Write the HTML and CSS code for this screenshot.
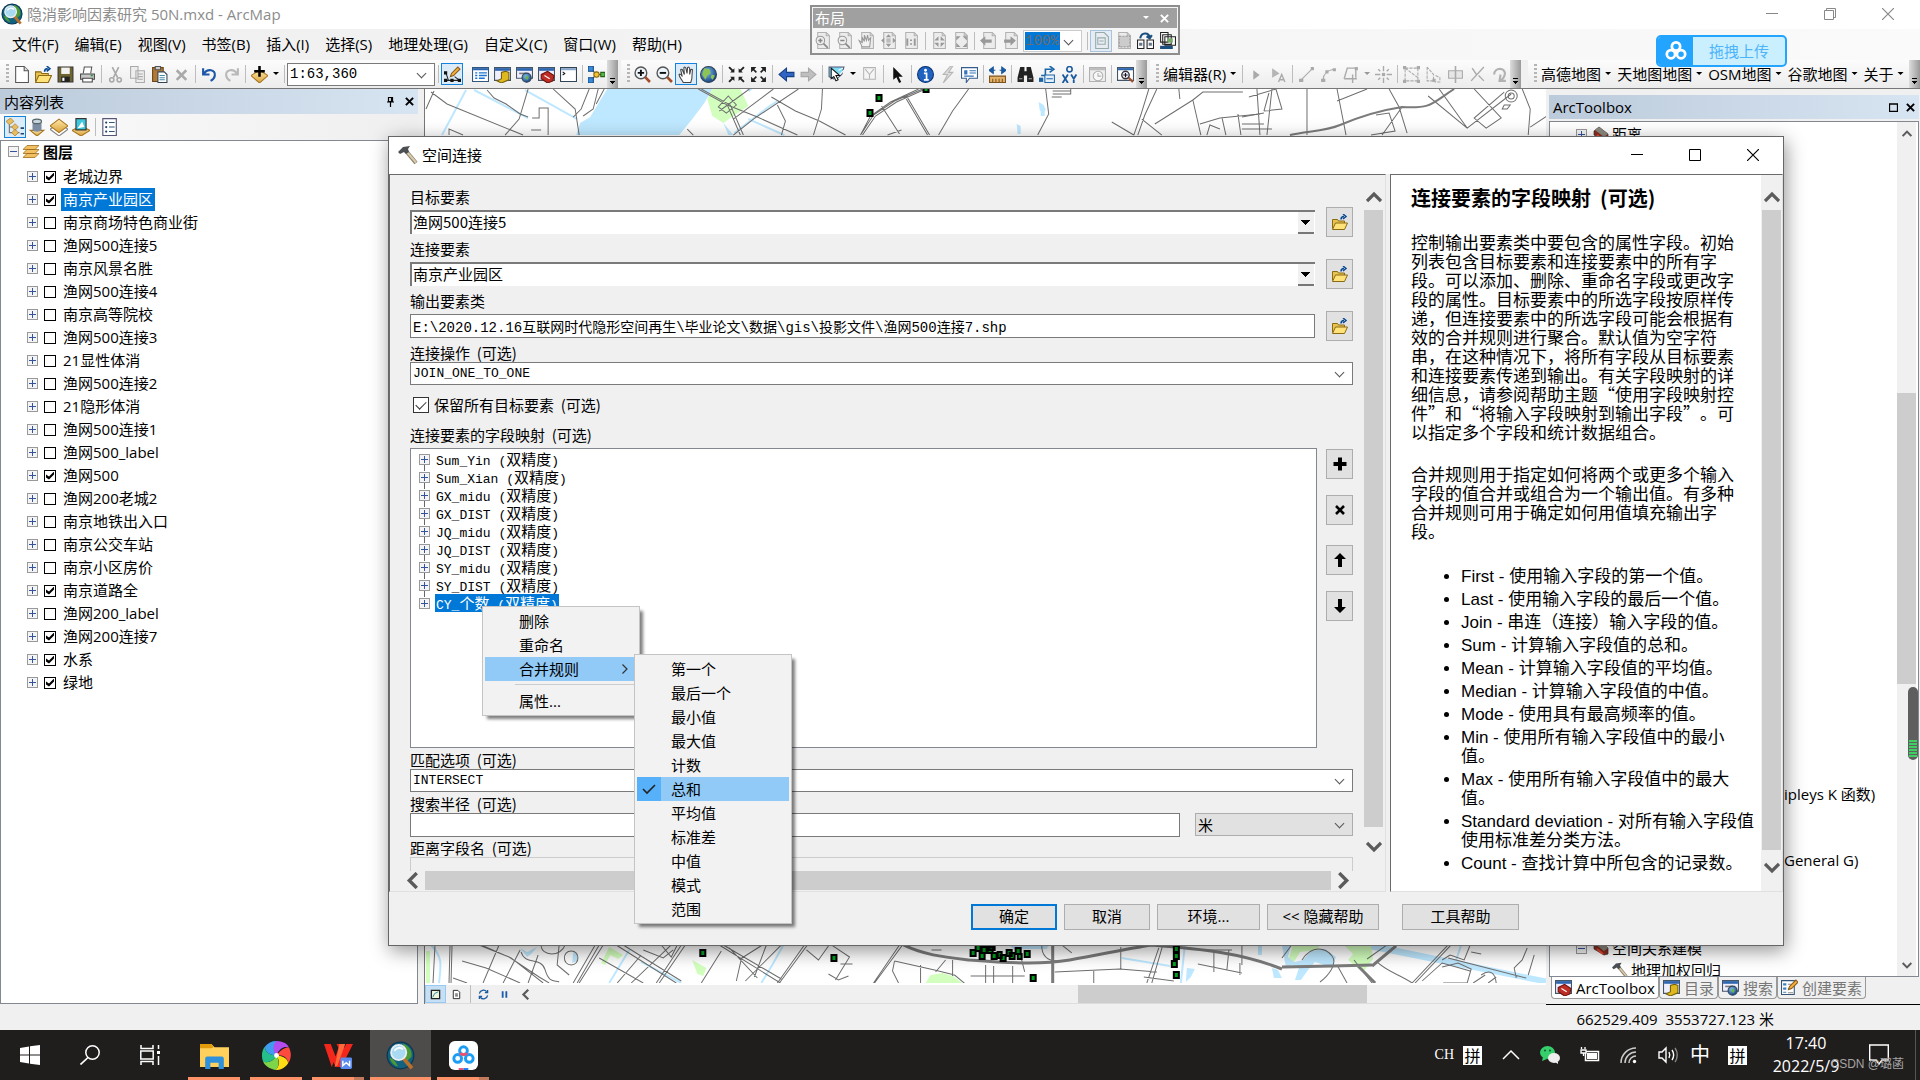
FILE: index.html
```html
<!DOCTYPE html>
<html lang="zh-CN">
<head>
<meta charset="utf-8">
<title>隐消影响因素研究 50N.mxd - ArcMap</title>
<link rel="stylesheet" href="styles.css">
</head>
<body>
<svg class="defs" aria-hidden="true">
<defs>
<linearGradient id="gold" x1="0" y1="0" x2="0" y2="1"><stop offset="0" stop-color="#ffe9a8"/><stop offset="1" stop-color="#d9a13a"/></linearGradient>
<radialGradient id="ball" cx=".4" cy=".35" r=".7"><stop offset="0" stop-color="#7fc0f0"/><stop offset="1" stop-color="#123a78"/></radialGradient>
</defs>
<symbol id="arcmap" viewBox="0 0 24 24"><circle cx="12" cy="12" r="11.5" fill="#0c3550"/><circle cx="12" cy="12" r="10.5" fill="#12617f"/><path d="M14 2c5 2 8 6 7 11l-4 4-3-4 2-4zM3 14c3 0 5 3 7 7-4-1-6-4-7-7z" fill="#4d9a35"/><path d="M14.5 14.500l7 8" stroke="#b8712c" stroke-width="3"/><circle cx="10.500" cy="9.500" r="6.300" fill="#a9daf2" stroke="#e8eef2" stroke-width="1.500"/><path d="M7 8c2-3 5-3 7-1" stroke="#fff" stroke-width="1.500" fill="none"/></symbol>
<symbol id="new" viewBox="0 0 16 16"><path d="M2.500.5h8l4 4v11h-12z" fill="#fff" stroke="#555"/><path d="M10.500.5v4h4" fill="#ddd" stroke="#555"/></symbol>
<symbol id="open" viewBox="0 0 16 16"><path d="M.5 14.500v-9h5l1 1.500h6v3" fill="#e8c352" stroke="#8a6a14"/><path d="M.5 15.500l3-6.500h12l-3 6.500z" fill="#ffe27a" stroke="#8a6a14"/><path d="M9 5.500c0-2 1-3 3-3M11 0l3 2.500L11 5" fill="none" stroke="#0a4a94" stroke-width="1.500"/></symbol>
<symbol id="save" viewBox="0 0 16 16"><path d="M1 1h14v14H1z" fill="#6e6430" stroke="#333"/><path d="M4 1.500h8v6H4z" fill="#f2f2f2"/><path d="M4 10h8v5H4z" fill="#222"/><path d="M5 11h2v3H5z" fill="#fff"/></symbol>
<symbol id="print" viewBox="0 0 16 16"><path d="M4 7l1-6h7l-1 6" fill="#fff" stroke="#555"/><path d="M1.500 7.500h13v5h-13z" fill="#c8c8c8" stroke="#444"/><path d="M3.500 11.500h9v3.500h-9z" fill="#fff" stroke="#444"/><path d="M11 9h2" stroke="#2a9030" stroke-width="1.500"/></symbol>
<symbol id="cut" viewBox="0 0 16 16"><path d="M5 1l5 10M11 1L6 11" stroke="#a9a9a9" stroke-width="1.500"/><circle cx="4.500" cy="13" r="2" fill="none" stroke="#a9a9a9" stroke-width="1.500"/><circle cx="11.500" cy="13" r="2" fill="none" stroke="#a9a9a9" stroke-width="1.500"/></symbol>
<symbol id="copy" viewBox="0 0 16 16"><path d="M1.500.5h7v11h-7zM6.500 4.500h8v11h-8z" fill="#eee" stroke="#aaa"/><path d="M8 7.500h5M8 10h5M8 12.500h5" stroke="#aaa"/></symbol>
<symbol id="paste" viewBox="0 0 16 16"><path d="M1.500 1.500h10v13h-10z" fill="#b27a35" stroke="#6c4514"/><path d="M4 .5h5v3H4z" fill="#ccc" stroke="#555"/><path d="M6.500 5.500h6l2.500 2.500v7.500H6.500z" fill="#fff" stroke="#345"/><path d="M8 9h5M8 11h5M8 13h5" stroke="#48a"/></symbol>
<symbol id="del" viewBox="0 0 16 16"><path d="M3.500 4l9 9M12.500 4l-9 9" stroke="#a9a9a9" stroke-width="2.400"/></symbol>
<symbol id="undo" viewBox="0 0 16 16"><path d="M2 2v6h6M2.500 7.500C6 2 14 3 13 9c-.5 3-2 4-4 5" fill="none" stroke="#1d57a8" stroke-width="2"/></symbol>
<symbol id="redo" viewBox="0 0 16 16"><path d="M14 2v6H8M13.500 7.500C10 2 2 3 3 9c.5 3 2 4 4 5" fill="none" stroke="#b9b9b9" stroke-width="2"/></symbol>
<symbol id="add" viewBox="0 0 16 16"><path d="M0 9l8-5 8 5-8 7z" fill="url(#gold)" stroke="#a87620"/><path d="M8 0v10M3 5h10" stroke="#000" stroke-width="2.400"/></symbol>
<symbol id="editor" viewBox="0 0 16 16"><path d="M1.500 13.500h13M2 7l2 6M10 10l4 3" stroke="#222"/><path d="M0 12h3v3H0zM6 12h3v3H6zM13 12h3v3h-3zM0 5h3v3H0z" fill="#111"/><path d="M6 10l1-3 6-6 2 2-6 6z" fill="#f3b13c" stroke="#8b5a1b"/></symbol>
<symbol id="toc" viewBox="0 0 16 16"><path d="M.5 1.500h15v13H.5z" fill="#fff" stroke="#34577e"/><path d="M1 2h14v2H1z" fill="#2c64ae"/><path d="M3 6.500h2M3 9h2M3 11.500h2M6.500 6.500H14M6.500 9H14M6.500 11.500H12" stroke="#1d74d0" stroke-width="1.300"/></symbol>
<symbol id="catalog" viewBox="0 0 16 16"><path d="M.5 1.500h15v12H.5z" fill="#eef" stroke="#456"/><path d="M1 2h14v2.500H1z" fill="#2c64ae"/><path d="M7 6l4-1 3 1v7l-7 3-4-2 4-2z" fill="#ddb91f" stroke="#77600a"/></symbol>
<symbol id="find2" viewBox="0 0 16 16"><path d="M.5 1.500h15v10H.5z" fill="#eef" stroke="#456"/><path d="M1 2h14v2.500H1z" fill="#2c64ae"/><path d="M3 7h7" stroke="#777" stroke-width="1.500"/><circle cx="10" cy="11" r="4.300" fill="url(#ball)" stroke="#345"/><path d="M9 9l3 1-1 3-2-1z" fill="#69b44a"/></symbol>
<symbol id="tbx" viewBox="0 0 16 16"><path d="M.5 1.500h15v12H.5z" fill="#eef" stroke="#456"/><path d="M1 2h14v2.500H1z" fill="#2c64ae"/><path d="M3 8l6-3 6 4-1 5-5 2-6-4z" fill="#bd2d24" stroke="#6d100a"/><path d="M6 9l5 3" stroke="#fff"/></symbol>
<symbol id="py" viewBox="0 0 16 16"><path d="M.5 1.500h15v13H.5z" fill="#fff" stroke="#345"/><path d="M1 2h14v2H1z" fill="#8ba9ce"/><path d="M2.500 5.500l2 1.500-2 1.500" fill="none" stroke="#111"/></symbol>
<symbol id="model" viewBox="0 0 16 16"><path d="M3 3l5 5-5 5M8 8h6" fill="none" stroke="#444"/><path d="M0 0h5v5H0zM0 11h5v5H0z" fill="#3b8ad8" stroke="#134a84"/><circle cx="8" cy="8" r="2.500" fill="#f4c430" stroke="#8a6a14"/><path d="M12 6h4v4h-4z" fill="#58b548" stroke="#256318"/></symbol>
<symbol id="zin" viewBox="0 0 16 16"><circle cx="6.500" cy="6.500" r="5.500" fill="#eef5fb" stroke="#555" stroke-width="1.300"/><path d="M10.500 10.500l4.500 4.500" stroke="#a34c2a" stroke-width="2.500"/><path d="M6.500 3.500v6M3.500 6.500h6" stroke="#111" stroke-width="1.800"/></symbol>
<symbol id="zout" viewBox="0 0 16 16"><circle cx="6.500" cy="6.500" r="5.500" fill="#eef5fb" stroke="#555" stroke-width="1.300"/><path d="M10.500 10.500l4.500 4.500" stroke="#a34c2a" stroke-width="2.500"/><path d="M3.500 6.500h6" stroke="#111" stroke-width="1.800"/></symbol>
<symbol id="hand" viewBox="0 0 16 16"><path d="M5 15.500C3 12 1 10 1 8c1-1 2 0 3 2L2.500 3.500c1-1 2 0 2 1L6 8 5.500 1.500c1-1 2 0 2 1L8.500 7 9 1.500c1-1 2 0 2 1V8l1-4.500c1-.8 2 0 1.500 1L13 12l-1 3.500z" fill="#fff" stroke="#444"/></symbol>
<symbol id="globe" viewBox="0 0 16 16"><circle cx="8" cy="8" r="7.500" fill="url(#ball)" stroke="#345"/><path d="M4 2l5 1 1 4-3 2-2 4-3-5zM11 8l3 1-2 4-2-2z" fill="#8cc456"/></symbol>
<symbol id="fin" viewBox="0 0 16 16"><path d="M1 1l4 4M15 1l-4 4M1 15l4-4M15 15l-4-4" stroke="#222" stroke-width="1.800"/><path d="M6 2v4H2zM10 2v4h4zM6 14v-4H2zM10 14v-4h4z" fill="#222"/></symbol>
<symbol id="fout" viewBox="0 0 16 16"><path d="M2 2l4 4M14 2l-4 4M2 14l4-4M14 14l-4-4" stroke="#222" stroke-width="1.500"/><path d="M1 1h5L1 6zM15 1h-5l5 5zM1 15h5l-5-5zM15 15h-5l5-5z" fill="#222"/></symbol>
<symbol id="back" viewBox="0 0 16 16"><path d="M1 8l7-6v4h7v4H8v4z" fill="#2f66c4" stroke="#163f86"/></symbol>
<symbol id="fwd" viewBox="0 0 16 16"><path d="M15 8L8 2v4H1v4h7v4z" fill="#bfbfbf" stroke="#a9a9a9"/></symbol>
<symbol id="selft" viewBox="0 0 16 16"><path d="M1 1h14l-2 7-6 5-6-3z" fill="#7ddcf4" stroke="#557"/><path d="M10 4l4-2M6 13l9-9" stroke="#fff"/><path d="M3 2v10l2.500-2 2 4 2-1-2-4H11z" fill="#fff" stroke="#111"/></symbol>
<symbol id="clr" viewBox="0 0 16 16"><path d="M2.500 1.500h11v11h-11z" fill="#f5f5f5" stroke="#b5b5b5"/><path d="M4 3l4 5 4-5M8 8v4" fill="none" stroke="#b5b5b5"/></symbol>
<symbol id="ptr" viewBox="0 0 16 16"><path d="M4 1v12l3-2.500L9.500 16l2-1L9 10h4z" fill="#111"/></symbol>
<symbol id="info" viewBox="0 0 16 16"><circle cx="8" cy="8" r="7.500" fill="#1f62c0" stroke="#0c3474"/><path d="M6.500 7H9v6M6.500 13H11" stroke="#fff" stroke-width="1.600" fill="none"/><circle cx="8" cy="4" r="1.300" fill="#fff"/></symbol>
<symbol id="bolt" viewBox="0 0 16 16"><path d="M11 0L4 8h4l-4 8 9-10H9l4-6z" fill="#ddd" stroke="#b5b5b5"/></symbol>
<symbol id="html" viewBox="0 0 16 16"><path d="M.5 1.500h15v10H8l-3 4v-4H.5z" fill="#fff" stroke="#355d8c"/><path d="M3 4h3v4H3z" fill="#3574b8"/><path d="M8 4.500h6M8 6.500h6M3 9.500h9" stroke="#3574b8"/></symbol>
<symbol id="meas" viewBox="0 0 16 16"><path d="M.5 9.500h15v6H.5z" fill="#e4b168" stroke="#7d5520"/><path d="M3.500 12v3M6.500 12v3M9.500 12v3M12.500 12v3" stroke="#7d5520"/><path d="M0 4l4-3v6zM16 4l-4-3v6zM3 4h3M10 4h3" fill="#1b5a9e" stroke="#1b5a9e"/></symbol>
<symbol id="bino" viewBox="0 0 16 16"><path d="M3 1h4v4h2V1h4l2.500 10v4H9.500V9h-3v6H.5v-4z" fill="#222"/><path d="M2 12h3M11 12h3" stroke="#aaa"/></symbol>
<symbol id="route" viewBox="0 0 16 16"><path d="M2 9h4V3h6M10 0l4 3-4 3" fill="none" stroke="#1b66a8" stroke-width="1.500"/><path d="M5.500 8.500h9v7h-9z" fill="#e5f1fa" stroke="#1b66a8"/><path d="M0 11h4v4H0z" fill="#1b66a8"/><path d="M7 12h6" stroke="#1b66a8"/></symbol>
<symbol id="xy" viewBox="0 0 16 16"><circle cx="8" cy="3" r="2.500" fill="none" stroke="#1b5a9e" stroke-width="1.500"/><path d="M1.500 8l5 8M6.500 8l-5 8M9.500 8l2.500 4 2.500-4M12 12v4" stroke="#1b5a9e" stroke-width="1.700" fill="none"/></symbol>
<symbol id="time" viewBox="0 0 16 16"><path d="M.5 1.500h15v13H.5z" fill="#eee" stroke="#b0b0b0"/><path d="M1 2h14v2H1z" fill="#bbb"/><circle cx="8.500" cy="9.500" r="4.500" fill="#f8f8f8" stroke="#b0b0b0"/><path d="M8.500 6.500v3h3" fill="none" stroke="#b0b0b0"/></symbol>
<symbol id="viewer" viewBox="0 0 16 16"><path d="M.5 1.500h15v12H.5z" fill="#fff" stroke="#456"/><path d="M1 2h14v2H1z" fill="#2c64ae"/><circle cx="8" cy="8.500" r="3.500" fill="#eef" stroke="#333" stroke-width="1.300"/><path d="M8 6.500v4M6 8.500h4" stroke="#111"/><path d="M11 11l4 4" stroke="#a34c2a" stroke-width="2"/></symbol>
<symbol id="g1" viewBox="0 0 16 16"><path d="M5 4l6 4.500L5 13z" fill="#a9a9a9"/></symbol>
<symbol id="g2" viewBox="0 0 16 16"><path d="M2 2l7 5-7 4z" fill="#b5b5b5"/><path d="M8 15l3-7 3 7M9 13h4" fill="none" stroke="#a9a9a9" stroke-width="1.300"/></symbol>
<symbol id="g3" viewBox="0 0 16 16"><path d="M2 14L14 2" stroke="#aaa"/><path d="M1 12h4v3H1zM12 1h3v3h-3z" fill="#aaa"/></symbol>
<symbol id="g4" viewBox="0 0 16 16"><path d="M3 13c0-6 4-9 10-10" fill="none" stroke="#aaa"/><path d="M1 12h4v3H1zM5 4h3v3H5zM12 2h3v3h-3z" fill="#aaa"/></symbol>
<symbol id="g5" viewBox="0 0 16 16"><path d="M2 12L5 2h8v9M2 12h8M10 8v8M6 12h8" fill="none" stroke="#aaa" stroke-width="1.300"/><path d="M12 1h3v3h-3z" fill="#aaa"/></symbol>
<symbol id="g6" viewBox="0 0 16 16"><path d="M8 0v5M8 11v5M0 8h5M11 8h5M3 3l2 2M13 3l-2 2M3 13l2-2M13 13l-2-2" stroke="#aaa" stroke-width="1.300"/><path d="M6.500 6.500h3v3h-3z" fill="#aaa"/></symbol>
<symbol id="g7" viewBox="0 0 16 16"><path d="M2 2h12v12H2zM2 2l12 9" fill="none" stroke="#aaa" stroke-dasharray="3 1"/><path d="M0 0h3v3H0zM13 0h3v3h-3zM0 13h3v3H0zM13 13h3v3h-3z" fill="#aaa"/></symbol>
<symbol id="g8" viewBox="0 0 16 16"><path d="M2 1v13h6V8L2 1M10 9l4 2v4h-5" fill="none" stroke="#aaa" stroke-dasharray="3 1"/><path d="M7 12h3v3H7z" fill="#aaa"/></symbol>
<symbol id="g9" viewBox="0 0 16 16"><path d="M1.500 4.500h13v7h-13z" fill="#e6e6e6" stroke="#aaa"/><path d="M8 0v16" stroke="#aaa" stroke-width="1.500"/></symbol>
<symbol id="g10" viewBox="0 0 16 16"><path d="M3 2l4 6M14 1L2 14M9 9l5 5" stroke="#aaa" stroke-width="1.300"/></symbol>
<symbol id="g11" viewBox="0 0 16 16"><path d="M3 8c0-7 11-7 10 0-.5 3-2 4-4 6M9 8l-1 6h6" fill="none" stroke="#b2b2b2" stroke-width="2"/></symbol>
<symbol id="pg" viewBox="0 0 16 16"><path d="M3.500.5h8l3 3v12h-11z" fill="#ececec" stroke="#b2b2b2"/><path d="M11.500.5v3h3" fill="none" stroke="#b2b2b2"/></symbol>
<symbol id="l1" viewBox="0 0 16 16"><use href="#pg"/><circle cx="6" cy="8" r="4" fill="#eee" stroke="#999"/><path d="M6 6v4M4 8h4M9 11l4 4" stroke="#888" stroke-width="1.500"/></symbol>
<symbol id="l2" viewBox="0 0 16 16"><use href="#pg"/><circle cx="6" cy="8" r="4" fill="#eee" stroke="#999"/><path d="M4 8h4M9 11l4 4" stroke="#888" stroke-width="1.500"/></symbol>
<symbol id="l3" viewBox="0 0 16 16"><use href="#pg"/><path d="M4 14L1 8l3 2V5l2 4V3l2 5 1-5 1 5 2-3-1 9z" fill="#f3f3f3" stroke="#999"/></symbol>
<symbol id="l4" viewBox="0 0 16 16"><use href="#pg"/><path d="M8 2l2.500 3h-5zM8 14l2.500-3h-5zM1 8l3-2.500v5zM15 8l-3-2.500v5z" fill="#999"/><path d="M6 6h4v4H6z" fill="#bbb"/></symbol>
<symbol id="l5" viewBox="0 0 16 16"><use href="#pg"/><path d="M5 6v7M12 6v7M8.500 7v1.500M8.500 10.500v1.500" stroke="#999" stroke-width="1.800"/></symbol>
<symbol id="l6" viewBox="0 0 16 16"><use href="#pg"/><path d="M8 4v4H4zM10 4v4h4zM8 14v-4H4zM10 14v-4h4z" fill="#999"/></symbol>
<symbol id="l7" viewBox="0 0 16 16"><use href="#pg"/><path d="M4 4h4L4 8zM14 4h-4l4 4zM4 14h4l-4-4zM14 14h-4l4-4z" fill="#999"/></symbol>
<symbol id="l8" viewBox="0 0 16 16"><use href="#pg"/><path d="M0 8l5-4v3h6v3H5v3z" fill="#999"/></symbol>
<symbol id="l9" viewBox="0 0 16 16"><use href="#pg"/><path d="M13 8L8 4v3H2v3h6v3z" fill="#999"/></symbol>
<symbol id="l10" viewBox="0 0 16 16"><path d="M2.500.5h8l4 4v11h-12z" fill="#e6ecf2" stroke="#9aa"/><path d="M4.500 5.500h7v6h-7zM6 8.500h4" fill="none" stroke="#9aa"/></symbol>
<symbol id="l11" viewBox="0 0 16 16"><use href="#pg"/><path d="M4 4h10v10H4z" fill="#ccc" stroke="#999" stroke-dasharray="2 1"/></symbol>
<symbol id="l12" viewBox="0 0 16 16"><path d="M3 6c1-6 8-6 9-1M9 4l3 2 2-3" fill="none" stroke="#1b4f80" stroke-width="2"/><path d="M.5 7.500h6v8h-6zM9.500 7.500h6v8h-6z" fill="#fff" stroke="#222"/><path d="M2 10h3v3H2zM11 10h3v3h-3z" fill="#678"/></symbol>
<symbol id="l13" viewBox="0 0 16 16"><path d="M1.500.5h7v9h-7zM3.500 2.500h8v9h-8zM5.500 4.500h10v8h-10z" fill="#fff" stroke="#222"/><path d="M8 6h5v4H8z" fill="#79a86a"/><path d="M1 13h12v3H1z" fill="#1b4f80"/></symbol>
<symbol id="t1" viewBox="0 0 16 16"><path d="M3 4v9h9M3 8h6" stroke="#777" fill="none"/><path d="M0 3l4-3 3 3-4 3zM5 8l3-3 3 3-3 3zM5 13l3-3 3 3-3 3z" fill="#e8bd62" stroke="#a87620" stroke-width=".6"/><path d="M13 9h3M13 14h3" stroke="#246" stroke-width="1.500"/></symbol>
<symbol id="t2" viewBox="0 0 16 16"><path d="M2 11l6 5 6-5z" fill="url(#gold)" stroke="#a87620"/><path d="M4 3v7c0 3 8 3 8 0V3z" fill="#7c8ca2"/><ellipse cx="8" cy="3" rx="4" ry="2" fill="#c9d3df" stroke="#566"/></symbol>
<symbol id="t3" viewBox="0 0 16 16"><path d="M0 10l8 6 8-6-8-5z" fill="#fff" stroke="#888"/><path d="M0 7l8-6 8 6-8 6z" fill="url(#gold)" stroke="#a87620"/></symbol>
<symbol id="t4" viewBox="0 0 16 16"><path d="M0 11l8 5 8-5-8-4z" fill="url(#gold)" stroke="#a87620"/><path d="M3.500.5h9v10h-9z" fill="#3fc8dd" stroke="#333"/><path d="M5 9l4-6 2 5z" fill="#fff"/></symbol>
<symbol id="t5" viewBox="0 0 16 16"><path d="M2.500.5h12v15h-12z" fill="#fff" stroke="#557"/><circle cx="5.500" cy="4" r="1" fill="#246"/><circle cx="5.500" cy="8" r="1" fill="#246"/><circle cx="5.500" cy="12" r="1" fill="#246"/><path d="M8 4h5M8 8h5M8 12h5" stroke="#357"/></symbol>
<symbol id="layers" viewBox="0 0 16 14"><path d="M0 13l4-4h12l-4 4zM0 9l4-4h12l-4 4zM0 5l4-4h12l-4 4z" fill="#f0c063" stroke="#a06c1c" stroke-width=".8"/></symbol>
<symbol id="hammer" viewBox="0 0 20 20"><path d="M8 6l10 12" stroke="#8d8168" stroke-width="4"/><path d="M8.500 6.500l9.500 11" stroke="#d8ccb0" stroke-width="2"/><path d="M0 7l5-5 7-1-2 3 1 3-3 2-2-2-4 2z" fill="#4c5054"/></symbol>
<symbol id="box" viewBox="0 0 16 16"><path d="M1 5l5-4 9 7v6l-4 1L1 9z" fill="#8c2d20" stroke="#333" stroke-width=".7"/><path d="M2 4l4-3 9 7-4 3z" fill="#8a8a80"/><path d="M4 9l6 5" stroke="#e84a30" stroke-width="2"/></symbol>
<symbol id="crt" viewBox="0 0 16 16"><path d="M.5 1.500h12v13H.5z" fill="#fff" stroke="#357"/><path d="M2 4h3v2H2zM2 8h3v2H2zM2 12h3v1H2z" fill="#3a80c0"/><path d="M6.500 5h4M6.500 9h3M6.500 13h5" stroke="#888"/><path d="M7 10l1-3 6-6 2 2-6 6z" fill="#f3b13c" stroke="#8b5a1b"/></symbol>
<symbol id="cloud" viewBox="0 0 24 24"><circle cx="12" cy="7" r="4.500" fill="none" stroke="currentColor" stroke-width="3"/><circle cx="6.500" cy="15.500" r="4.500" fill="none" stroke="currentColor" stroke-width="3"/><circle cx="17.500" cy="15.500" r="4.500" fill="none" stroke="currentColor" stroke-width="3"/></symbol>
<symbol id="up" viewBox="0 0 16 12"><path d="M1 10l7-7 7 7" fill="none" stroke="#5b5b5b" stroke-width="3.200"/></symbol>
<symbol id="down" viewBox="0 0 16 12"><path d="M1 2l7 7 7-7" fill="none" stroke="#5b5b5b" stroke-width="3.200"/></symbol>
<symbol id="left" viewBox="0 0 12 16"><path d="M10 1L3 8l7 7" fill="none" stroke="#5b5b5b" stroke-width="3.200"/></symbol>
<symbol id="right" viewBox="0 0 12 16"><path d="M2 1l7 7-7 7" fill="none" stroke="#5b5b5b" stroke-width="3.200"/></symbol>
<symbol id="min" viewBox="0 0 12 12"><path d="M0 5.500h12" stroke="currentColor"/></symbol>
<symbol id="max" viewBox="0 0 12 12"><path d="M.5.5h11v11H.5z" fill="none" stroke="currentColor"/></symbol>
<symbol id="cls" viewBox="0 0 12 12"><path d="M0 0l12 12M12 0L0 12" stroke="currentColor" stroke-width="1.200"/></symbol>
<symbol id="clsb" viewBox="0 0 10 10"><path d="M1 1l8 8M9 1L1 9" stroke="currentColor" stroke-width="2.200"/></symbol>
</svg>

<header class="titlebar">
  <svg class="i22"><use href="#arcmap"/></svg>
  <h1>隐消影响因素研究 50N.mxd - ArcMap</h1>
  <div class="winctl">
    <button aria-label="最小化"><svg class="i12"><use href="#min"/></svg></button>
    <button aria-label="还原"><svg class="i12" viewBox="0 0 12 12"><path d="M.5 2.500h9v9h-9zM2.500 2.500v-2h9v9h-2" fill="none" stroke="#888"/></svg></button>
    <button aria-label="关闭"><svg class="i12"><use href="#cls"/></svg></button>
  </div>
</header>

<nav class="menubar">
  <button>文件(F)</button><button>编辑(E)</button><button>视图(V)</button><button>书签(B)</button><button>插入(I)</button><button>选择(S)</button><button>地理处理(G)</button><button>自定义(C)</button><button>窗口(W)</button><button>帮助(H)</button>
</nav>

<div class="toolbars">
  <div class="toolbar">
    <i class="grip"></i>
    <button><svg><use href="#new"/></svg></button><button><svg><use href="#open"/></svg></button><button><svg><use href="#save"/></svg></button><button><svg><use href="#print"/></svg></button><i class="sep"></i>
    <button><svg><use href="#cut"/></svg></button><button><svg><use href="#copy"/></svg></button><button><svg><use href="#paste"/></svg></button><button><svg><use href="#del"/></svg></button><i class="sep"></i>
    <button><svg><use href="#undo"/></svg></button><button><svg><use href="#redo"/></svg></button><i class="sep"></i>
    <button><svg><use href="#add"/></svg></button><i class="caret"></i><i class="sep"></i>
    <div class="pick scale"><select aria-label="比例尺"><option>1:63,360</option></select></div><i class="sep"></i>
    <button class="on"><svg><use href="#editor"/></svg></button><i class="sep blank"></i>
    <button><svg><use href="#toc"/></svg></button><button><svg><use href="#catalog"/></svg></button><button><svg><use href="#find2"/></svg></button><button><svg><use href="#tbx"/></svg></button><button><svg><use href="#py"/></svg></button><i class="sep"></i>
    <button><svg><use href="#model"/></svg></button><i class="more"></i>
  </div>
  <div class="toolbar">
    <i class="grip"></i>
    <button><svg><use href="#zin"/></svg></button><button><svg><use href="#zout"/></svg></button><button class="on"><svg><use href="#hand"/></svg></button><button><svg><use href="#globe"/></svg></button><i class="sep"></i>
    <button><svg><use href="#fin"/></svg></button><button><svg><use href="#fout"/></svg></button><i class="sep"></i>
    <button><svg><use href="#back"/></svg></button><button><svg><use href="#fwd"/></svg></button><i class="sep"></i>
    <button><svg><use href="#selft"/></svg></button><i class="caret"></i><button><svg><use href="#clr"/></svg></button><i class="sep"></i>
    <button><svg><use href="#ptr"/></svg></button><i class="sep"></i>
    <button><svg><use href="#info"/></svg></button><button><svg><use href="#bolt"/></svg></button><button><svg><use href="#html"/></svg></button><i class="sep"></i>
    <button><svg><use href="#meas"/></svg></button><i class="sep"></i>
    <button><svg><use href="#bino"/></svg></button><button><svg><use href="#route"/></svg></button><button><svg><use href="#xy"/></svg></button><i class="sep"></i>
    <button><svg><use href="#time"/></svg></button><i class="sep"></i>
    <button><svg><use href="#viewer"/></svg></button><i class="more"></i>
  </div>
  <div class="toolbar wide">
    <i class="grip"></i>
    <button class="word">编辑器(R)<i class="caret"></i></button><i class="sep"></i>
    <button><svg><use href="#g1"/></svg></button><button><svg><use href="#g2"/></svg></button><i class="sep"></i>
    <button><svg><use href="#g3"/></svg></button><button><svg><use href="#g4"/></svg></button><button><svg><use href="#g5"/></svg></button><i class="caret dim"></i><button><svg><use href="#g6"/></svg></button><i class="sep"></i>
    <button><svg><use href="#g7"/></svg></button><button><svg><use href="#g8"/></svg></button><button><svg><use href="#g9"/></svg></button><button><svg><use href="#g10"/></svg></button><button><svg><use href="#g11"/></svg></button><i class="more"></i>
  </div>
  <div class="toolbar last">
    <i class="grip"></i>
    <button class="word">高德地图<i class="caret"></i></button><button class="word">天地图地图<i class="caret"></i></button><button class="word">OSM地图<i class="caret"></i></button><button class="word">谷歌地图<i class="caret"></i></button><button class="word">关于<i class="caret"></i></button><i class="more"></i>
  </div>
</div>

<main class="workspace">
  <aside class="toc">
    <div class="panehead"><h2>内容列表</h2>
      <svg class="i12" viewBox="0 0 12 12"><path d="M4.500 1.500h4v4h-4zM3 6h7M6.500 6v5M7.500 1v5" fill="none" stroke="#000" stroke-width="1.200"/></svg>
      <svg class="i9"><use href="#clsb"/></svg></div>
    <div class="tocbar"><button class="on"><svg><use href="#t1"/></svg></button><button><svg><use href="#t2"/></svg></button><button><svg><use href="#t3"/></svg></button><button><svg><use href="#t4"/></svg></button><i class="sep"></i><button><svg><use href="#t5"/></svg></button></div>
    <div class="layers">
      <div class="root"><i class="pm minus"></i><svg><use href="#layers"/></svg><b>图层</b></div>
      <ul>
        <li><i class="pm"></i><label><input type="checkbox" checked><span>老城边界</span></label></li>
        <li><i class="pm"></i><label><input type="checkbox" checked><span class="hit">南京产业园区</span></label></li>
        <li><i class="pm"></i><label><input type="checkbox"><span>南京商场特色商业街</span></label></li>
        <li><i class="pm"></i><label><input type="checkbox"><span>渔网500连接5</span></label></li>
        <li><i class="pm"></i><label><input type="checkbox"><span>南京风景名胜</span></label></li>
        <li><i class="pm"></i><label><input type="checkbox"><span>渔网500连接4</span></label></li>
        <li><i class="pm"></i><label><input type="checkbox"><span>南京高等院校</span></label></li>
        <li><i class="pm"></i><label><input type="checkbox"><span>渔网500连接3</span></label></li>
        <li><i class="pm"></i><label><input type="checkbox"><span>21显性体消</span></label></li>
        <li><i class="pm"></i><label><input type="checkbox"><span>渔网500连接2</span></label></li>
        <li><i class="pm"></i><label><input type="checkbox"><span>21隐形体消</span></label></li>
        <li><i class="pm"></i><label><input type="checkbox"><span>渔网500连接1</span></label></li>
        <li><i class="pm"></i><label><input type="checkbox"><span>渔网500_label</span></label></li>
        <li><i class="pm"></i><label><input type="checkbox" checked><span>渔网500</span></label></li>
        <li><i class="pm"></i><label><input type="checkbox"><span>渔网200老城2</span></label></li>
        <li><i class="pm"></i><label><input type="checkbox"><span>南京地铁出入口</span></label></li>
        <li><i class="pm"></i><label><input type="checkbox"><span>南京公交车站</span></label></li>
        <li><i class="pm"></i><label><input type="checkbox"><span>南京小区房价</span></label></li>
        <li><i class="pm"></i><label><input type="checkbox" checked><span>南京道路全</span></label></li>
        <li><i class="pm"></i><label><input type="checkbox"><span>渔网200_label</span></label></li>
        <li><i class="pm"></i><label><input type="checkbox" checked><span>渔网200连接7</span></label></li>
        <li><i class="pm"></i><label><input type="checkbox" checked><span>水系</span></label></li>
        <li><i class="pm"></i><label><input type="checkbox" checked><span>绿地</span></label></li>
      </ul>
    </div>
  </aside>

  <section class="mapcol">
    <svg class="map" viewBox="424 90 1122 893" preserveAspectRatio="xMinYMin slice">
      <g fill="#bee8ff">
        <path d="M606 90h105l-8 14-12 16-13 16H575l4-12 10-6z"/>
        <path d="M1037 103l5 3 2 5-3 4-3-4zM1039 111h4v6h-4zM1015 125l4 2v8h-3zM746 90h5l-3 3zM722 124l10 12h-5z"/>
        <path d="M519 948l7 4 10-5-6 7-4 3zM572 952l5 3-1 6-5 2zM1007 945h40l-2 4h-33zM1185 968l8 1-4 8-5 5zM1256 946h4v9h-4zM1270 968l6 2 4 8h-8z"/>
        <path d="M1280 945h9l-3 12 7 5 8-2 8-9 14-2 11 8-4 10-8-2-9-3-7 8-7 10h-6l4-12-7-3-6 3z"/>
        <path d="M1346 945l30-1 170 35v6z"/>
      </g>
      <g fill="#d3ffbe"><path d="M711 90h28l8 17-25 17-11-7-5-17zM425 951h4v32h-4zM608 947l14 8-5 4-8-4-5 10-4-2zM691 960l14 8-3 8-6-2zM924 983l5-8 12-2 10 3 10 7zM1291 945h27l-3 5-17 2-6 10-5-4zM1342 945h27l2 14-10 13-15-12 5-6z"/></g>
      <g fill="none" stroke="#bee8ff" stroke-width="2"><path d="M465 91l-24 45M473 91l54 28M524 91l52 29M733 134l34-26 9-6M747 120l36 16M430 945c12 12 10 20 8 38M782 945l-10 18-12 20M640 962l40 21M1183 945l-4 38M1120 958l48 8M1459 945l-6 18M628 950l-20 33"/></g>
      <g fill="none" stroke="#6e6e6e">
        <path d="M425 110l8-18M430 93l16 12 76 31M486 91l7 8 12 6 14 10 8 3M527 90l-9 30-14 16M552 90l22 20 4 26M531 119h7v-10h9v27M530 131h10M448 136v-6l14 6M588 90l-8 20-8 8M597 90l-5 20-10 7M603 90l-8 15"/>
        <path d="M697 90l29 16 13 30M700 90l29 16 13 30M726 106l30 12 40 18M748 90l-30 22M772 90l-40 30M797 90l-45 30-20 16M770 98l24 14 24 10 26 14M821 90l-1 20-8 26M727 97l8 9-10 8-8-6zM776 106l8 16-4 14M686 130l6 6"/>
        <path d="M924 90l-29 13-21 14-13 19M921 90l-28 12-21 14-13 20M917 90l-28 13-20 14-10 19M905 97l23 39M903 97l23 39M967 90l-16 22-14 24M880 107l18 28M886 136l14-5M1044 90l3 25-11 21M1051 92h18M1051 95h18v-5M1050 98h10M1177 90l1 10M1147 90l-8 26-7 20M1155 90l-12 26-7 20M1153 125l38-24 10-8h40M1110 123l22 13M1191 101l8 35M1198 125l20-6 40-4M1140 120l20 16M1220 118l4 18M1236 115l3 21M1205 136l3-10 10 4"/>
        <path d="M1247 98l27-8 6 20-18 2M1262 112l5-18M1255 90l3 46M1270 90l-5 46M1305 90v46M1240 118l22-4M1240 125h22M1240 130h30M1335 90l9 46M1335 102l30-12M1387 90l10 18 8 26M1374 116l13-2 6 18-24 4M1380 136l20-28M1426 97l39 32 44-34M1437 90l28 39M1472 90l27 29-15 10-12-10 30-26M1520 90l8 20-2 26M1528 128l18-12"/>
        <circle cx="1509" cy="97" r="6"/><circle cx="1509" cy="97" r="3"/><path d="M1502 106h6l-3 4h-5z"/>
        <path d="M432 983l2-38M449 945l-1 38M451 945l-1 38M461 961l24 7 34 15M452 978l14 5M498 945l-16 38M478 945l30 12 30 20 10 6M480 945l30 13 32 25M519 950l-17 33M520 952c4 14 20 4 24 18s10 10 14 12M537 955l-10 28M540 945c0 12 20 12 24 0M558 945l-2 20 12 10M570 951c9 0 9 14 0 14s-9-14 0-14zM594 945l-22 38M602 945l-24 38M598 945l-22 38M598 958l44 25M615 945l60 38M622 945l58 36M640 955l-24 28M630 983l40-38M655 983l25-38M684 945l-26 38M642 950l20 8 10-8M660 945l10 12 6-12"/>
        <path d="M718 945l61 38M722 945l58 34M761 945l-22 14M740 959l-5 22M765 945l-12 32M780 945l-36 36M806 945l-28 38M803 945l-27 38M728 948l28 30M700 983l20-32M805 950l12 10 10-14M830 945l18 12-14 23M827 974l10 6 10-4M839 964h12M901 945l-28 38M898 945l-26 38M893 961l-2 10 6 12M893 961l40 9 20 5 12 10M919 965v20M944 960l-10 12M930 950h10M951 960v16M969 976h54M984 965v18M992 966v17M1011 966v17M1020 960l3 12M1053 972l65-3 37 3M1092 970v17M1119 947v22M1157 948l-12 35M1161 945l-11 38M1142 977l30 4M1196 964l44 9M1212 950v22M1227 950l-2 20M1238 963v12M1202 950h28M1240 945v20M1040 945c0 10 4 16 16 16M1060 945l10 8"/>
        <path d="M1280 958l12-16M1300 960c10-16 24-12 30-4s-4 20-12 26M1335 965l10 18M1352 960l18 23M1375 962c10 10 22 12 35 21M1385 945l-20 14M1410 983l36-38M1413 983l36-38M1448 955l14 5 6-15M1448 955l-8 5M1440 967l16-4 13 6-4 14h-24M1420 981l20-18 28 8M1469 952l10 2M1446 958l78 20M1479 975c8-6 14-3 15 8M1471 983l12-8M1486 983l8-6M1525 948l-5 12-8 8 2 10M1532 955l-6 20"/>
      </g>
      <g fill="none" stroke="#7b7b7b" stroke-width="3"><path d="M902 945c20 10 40 12 66 15 40 3 70 5 100 0s55-11 82-15c50 4 90 8 130 24M1051 945v38M1280 967l50-1 40-1M1355 965l18 18M1370 966l24-20"/><path d="M1288 136c20-4 36-4 50-10s36-14 62-18c30 2 30-4 52-18" stroke-width="2"/></g>
      <g fill="#00a321" stroke="#000" stroke-width="2">
        <path d="M974 945h5v6h-5zM969 950h5v6h-5zM980 947h5v6h-5zM978 953h5v6h-5zM986 947h5v6h-5zM990 953h5v6h-5zM999 955h5v6h-5zM1005 950h5v6h-5zM1008 953h5v6h-5zM1014 948h5v6h-5zM1023 951h5v6h-5zM988 945h5v5h-5zM996 952h4v6h-4zM1016 954h4v5h-4z"/>
        <path d="M875 96h5v6h-5zM866 111h5v6h-5zM922 87h5v6h-5zM699 950h5v6h-5zM830 955h5v6h-5zM1029 975h5v6h-5zM1172 946h5v6h-5zM1172 953h5v6h-5zM1170 961h5v6h-5zM1172 972h5v6h-5z"/>
      </g>
    </svg>
    <div class="mapbar">
      <button class="on"><svg viewBox="0 0 12 12"><path d="M1.500 1.500h9v9h-9z" fill="#eef6dd" stroke="#222" stroke-width="1.400"/><path d="M3 9l2-4 4-2" stroke="#2a80a0" fill="none"/></svg></button>
      <button><svg viewBox="0 0 12 12"><path d="M2.500 1.500h5l2 2v7h-7z" fill="#fff" stroke="#222"/><path d="M4.500 5.500h3M4.500 7.500h3" stroke="#222"/></svg></button><i class="sep"></i>
      <button><svg viewBox="0 0 12 12"><path d="M1.500 5a4.500 4.500 0 018-2M10.500 1v3h-3M10.500 7a4.500 4.500 0 01-8 2M1.500 11V8h3" fill="none" stroke="#1b5a9e" stroke-width="1.400"/></svg></button>
      <button><svg viewBox="0 0 12 12"><path d="M4 2.500v7M8 2.500v7" stroke="#1b5aae" stroke-width="2"/></svg></button>
      <button><svg><use href="#left"/></svg></button>
      <div class="track"><i></i></div>
    </div>
  </section>

  <aside class="toolbox">
    <div class="panehead"><h2>ArcToolbox</h2><svg class="i9" viewBox="0 0 9 9"><path d="M.5 1h8v7.500h-8z" fill="none" stroke="#000" stroke-width="1.300"/></svg><svg class="i9"><use href="#clsb"/></svg></div>
    <div class="tbxbody">
      <ul>
        <li class="r1"><i class="pm"></i><svg><use href="#box"/></svg><span>距离</span></li>
        <li class="r31 edge"><span>ipleys K 函数)</span></li>
        <li class="r34 edge"><span>General G)</span></li>
        <li class="r38"><i class="pm minus"></i><svg><use href="#box"/></svg><span>空间关系建模</span></li>
        <li class="r39 leaf"><svg><use href="#hammer"/></svg><span>地理加权回归</span></li>
      </ul>
      <div class="vbar slim"><svg><use href="#up"/></svg><div class="slot"><i></i></div><svg><use href="#down"/></svg></div>
      <i class="pill"></i>
    </div>
    <div class="tabs"><button class="cur"><svg><use href="#tbx"/></svg>ArcToolbox</button><button><svg><use href="#catalog"/></svg>目录</button><button><svg><use href="#find2"/></svg>搜索</button><button><svg><use href="#crt"/></svg>创建要素</button></div>
  </aside>
</main>

<footer class="status"><span>662529.409&nbsp; 3553727.123 米</span></footer>

<div class="taskbar">
  <button class="app"><svg viewBox="0 0 20 20"><path d="M0 3l9-1.500V9.500H0zM10 1.300L20 0v9.500H10zM0 10.500h9v8L0 17zM10 10.500h10V20l-10-1.300z" fill="#fff"/></svg></button>
  <button class="app"><svg viewBox="0 0 20 20"><circle cx="12.500" cy="7.500" r="6.700" fill="none" stroke="#fff" stroke-width="1.500"/><path d="M8 12.500L.5 19.500" stroke="#fff" stroke-width="1.700"/></svg></button>
  <button class="app"><svg viewBox="0 0 20 20"><path d="M1 0v3.500h12V0M1 20v-3.500h12V20M.8 6h12.400v8H.8zM18.500 0v4M18.500 11v9" fill="none" stroke="#fff" stroke-width="1.500"/><path d="M17 6h3v3h-3z" fill="#fff"/></svg></button>
  <button class="app run first"><svg class="big" viewBox="0 0 28 28"><path d="M0 3h11l3 3h14v19H0z" fill="#ffd15c"/><path d="M0 3h11l2 3-2 1H0z" fill="#e29a0b"/><path d="M5 27V17q0-2 2-2h14q2 0 2 2v10h-5v-6h-8v6z" fill="#2f90dc"/></svg></button>
  <button class="app run"><svg class="big" viewBox="0 0 30 30"><path d="M15 15C10 10 10 3 15 0c8 0 12 4 13 7-4-2-10 0-13 8z" fill="#b44cf0"/><path d="M15 15c5-7 11-9 13-8 3 6 2 12-1 16 0-5-5-9-12-8z" fill="#ff4b3e"/><path d="M15 15c7 0 12 4 12 8-3 5-8 7-13 7 4-4 5-9 1-15z" fill="#ffdc14"/><path d="M15 15c4 7 2 13-1 15-6-1-11-4-13-9 4 2 10 1 14-6z" fill="#7fd54a"/><path d="M15 15c-4 7-11 8-14 6C-1 15 0 9 3 6c0 5 5 9 12 9z" fill="#25c08a"/><path d="M15 15C8 15 3 11 3 6c3-4 7-6 12-6-4 4-4 10 0 15z" fill="#3f9cf0"/><circle cx="15" cy="15" r="2.500" fill="#fff"/></svg></button>
  <button class="app run two"><svg class="big" viewBox="0 0 30 28"><path d="M0 2h7l5 13 3-9-2-4h6l2 4 2-4h7L18 26h-6L10 21 8 26z" fill="#f4271c"/><path d="M16 2h6l-8 22-3 2z" fill="#ff6a3d"/><rect x="17" y="16" width="12" height="12" rx="1.500" fill="#5b8bf0"/><path d="M19.500 19.500v5l3.500-3 3.500 3v-5" fill="none" stroke="#fff" stroke-width="1.500"/></svg></button>
  <button class="app run active"><svg class="big"><use href="#arcmap"/></svg></button>
  <button class="app run two"><svg class="big" viewBox="0 0 30 30"><rect width="30" height="30" rx="6" fill="#fff"/><g fill="none" stroke="#1b9df5" stroke-width="3"><circle cx="15" cy="10" r="4"/><circle cx="9" cy="18" r="4"/><circle cx="21" cy="18" r="4"/></g><path d="M11.500 12.500c1.500 2 5.500 2 7 0" fill="none" stroke="#f0506a" stroke-width="3"/><path d="M10 28h5v2h-5z" fill="#f0506a"/><path d="M15 28h5v2h-5z" fill="#1b7df5"/></svg></button>
  <div class="tray">
    <span class="ch">CH</span><span class="ime">拼</span>
    <svg class="i18" viewBox="0 0 18 18"><path d="M1 13l8-8 8 8" fill="none" stroke="#fff" stroke-width="1.500"/></svg>
    <svg class="i20" viewBox="0 0 20 20"><ellipse cx="7.500" cy="7.500" rx="7.500" ry="6.500" fill="#35d06c"/><path d="M2 16l1-4 4 2z" fill="#35d06c"/><ellipse cx="14" cy="13" rx="6" ry="5" fill="#eee"/><path d="M18 19l-3-2h3z" fill="#eee"/><circle cx="5" cy="5.500" r="1" fill="#1a5030"/><circle cx="10" cy="5.500" r="1" fill="#1a5030"/></svg>
    <svg class="i20" viewBox="0 0 20 20"><path d="M5.500 6.500h13v9h-13z" fill="none" stroke="#fff" stroke-width="1.500"/><path d="M7 8h10v6H7z" fill="#fff"/><path d="M1.500 2v2M5 2v2M1 5h5v3H1zM3.500 8v3" stroke="#fff" fill="#201d1d" stroke-width="1.300"/></svg>
    <svg class="i18" viewBox="0 0 18 18"><g fill="none" stroke="#ccc" stroke-width="1.500"><path d="M5 17A11 11 0 0116 6M9 17a7 7 0 017-7M1 17A15 15 0 0116 2"/></g><circle cx="14.500" cy="15.500" r="1.700" fill="#fff"/></svg>
    <svg class="i20" viewBox="0 0 20 20"><path d="M1 7h3l4-4v14l-4-4H1zM11 7c1 2 1 4 0 6M14 5c2 3 2 7 0 10" fill="none" stroke="#fff" stroke-width="1.400"/><path d="M17 3c3 4 3 10 0 14" fill="none" stroke="#888" stroke-width="1.400"/></svg>
    <span class="zh">中</span><span class="ime">拼</span>
    <div class="clock"><span>17:40</span><span>2022/5/9</span></div>
    <svg class="note" viewBox="0 0 20 22"><path d="M.7 1h18.600v15H13l-3 4-3-4H.7z" fill="none" stroke="#fff" stroke-width="1.400"/></svg>
    <span class="mark">CSDN @璐菡</span>
  </div>
</div>

<div class="layoutbar">
  <div class="lhead"><span>布局</span><i class="caret"></i><svg class="i9"><use href="#clsb"/></svg></div>
  <div class="lrow">
    <button><svg><use href="#l1"/></svg></button><button><svg><use href="#l2"/></svg></button><button><svg><use href="#l3"/></svg></button><button><svg><use href="#l4"/></svg></button><button><svg><use href="#l5"/></svg></button><i class="sep"></i><button><svg><use href="#l6"/></svg></button><button><svg><use href="#l7"/></svg></button><i class="sep"></i><button><svg><use href="#l8"/></svg></button><button><svg><use href="#l9"/></svg></button>
    <div class="pick zoom"><select aria-label="缩放"><option>100%</option></select></div><i class="sep"></i>
    <button class="on"><svg><use href="#l10"/></svg></button><button><svg><use href="#l11"/></svg></button><button><svg><use href="#l12"/></svg></button><button><svg><use href="#l13"/></svg></button>
  </div>
</div>

<button class="upload"><span class="logo"><svg><use href="#cloud"/></svg></span><span class="txt">拖拽上传</span></button>

<div class="dialog" role="dialog" aria-labelledby="dlg-title">
  <div class="dhead"><svg class="i20"><use href="#hammer"/></svg><h2 id="dlg-title">空间连接</h2>
    <div class="winctl dark"><button aria-label="最小化"><svg class="i12"><use href="#min"/></svg></button><button aria-label="最大化"><svg class="i12"><use href="#max"/></svg></button><button aria-label="关闭"><svg class="i12"><use href="#cls"/></svg></button></div></div>
  <div class="dbody">
    <div class="formpane">
      <div class="formrow">
        <form>
          <label class="tall" for="f1">目标要素</label>
          <div class="line"><div class="pick old"><select id="f1"><option>渔网500连接5</option></select></div><button type="button" class="sq"><svg><use href="#open"/></svg></button></div>
          <label class="tall next" for="f2">连接要素</label>
          <div class="line"><div class="pick old"><select id="f2"><option>南京产业园区</option></select></div><button type="button" class="sq"><svg><use href="#open"/></svg></button></div>
          <label class="tall next" for="f3">输出要素类</label>
          <div class="line"><input id="f3" type="text" value="E:\2020.12.16互联网时代隐形空间再生\毕业论文\数据\gis\投影文件\渔网500连接7.shp"><button type="button" class="sq"><svg><use href="#open"/></svg></button></div>
          <label class="low wide" for="f4">连接操作&nbsp; (可选)</label>
          <div class="pick"><select id="f4" class="code"><option>JOIN_ONE_TO_ONE</option></select></div>
          <label class="check"><input type="checkbox" checked>保留所有目标要素&nbsp; (可选)</label>
          <div class="cap">连接要素的字段映射&nbsp; (可选)</div>
          <div class="treerow">
            <ul class="tree">
              <li><i class="pm"></i><span><code>Sum_Yin (</code>双精度<code>)</code></span></li>
              <li><i class="pm"></i><span><code>Sum_Xian (</code>双精度<code>)</code></span></li>
              <li><i class="pm"></i><span><code>GX_midu (</code>双精度<code>)</code></span></li>
              <li><i class="pm"></i><span><code>GX_DIST (</code>双精度<code>)</code></span></li>
              <li><i class="pm"></i><span><code>JQ_midu (</code>双精度<code>)</code></span></li>
              <li><i class="pm"></i><span><code>JQ_DIST (</code>双精度<code>)</code></span></li>
              <li><i class="pm"></i><span><code>SY_midu (</code>双精度<code>)</code></span></li>
              <li><i class="pm"></i><span><code>SY_DIST (</code>双精度<code>)</code></span></li>
              <li><i class="pm"></i><span class="hit"><code>CY_</code>个数<code> (</code>双精度<code>)</code></span></li>
            </ul>
            <div class="treebtns">
              <button type="button" class="sq"><svg viewBox="0 0 16 16"><path d="M8 1.500v13M1.500 8h13" stroke="#000" stroke-width="4"/></svg></button>
              <button type="button" class="sq"><svg viewBox="0 0 16 16"><path d="M4 4l8 8M12 4l-8 8" stroke="#000" stroke-width="2.600"/></svg></button>
              <button type="button" class="sq far"><svg viewBox="0 0 16 16"><path d="M8 1l6 6h-4v8H6V7H2z"/></svg></button>
              <button type="button" class="sq"><svg viewBox="0 0 16 16"><path d="M8 15l6-6h-4V1H6v8H2z"/></svg></button>
            </div>
          </div>
          <label class="low" for="f5">匹配选项&nbsp; (可选)</label>
          <div class="pick"><select id="f5" class="code"><option>INTERSECT</option></select></div>
          <label class="low" for="f6">搜索半径&nbsp; (可选)</label>
          <div class="line radius"><input id="f6" type="text"><div class="pick gray"><select aria-label="单位"><option>米</option></select></div></div>
          <label class="low" for="f7">距离字段名&nbsp; (可选)</label>
          <input id="f7" type="text" class="cutoff" disabled>
        </form>
        <div class="vbar form"><svg><use href="#up"/></svg><div class="slot"><i></i></div><svg><use href="#down"/></svg></div>
      </div>
      <div class="hbar"><svg><use href="#left"/></svg><i></i><svg><use href="#right"/></svg></div>
    </div>
    <div class="helppane">
      <article>
        <h3>连接要素的字段映射&nbsp; (可选)</h3>
        <p>控制输出要素类中要包含的属性字段。初始列表包含目标要素和连接要素中的所有字段。可以添加、删除、重命名字段或更改字段的属性。目标要素中的所选字段按原样传递，但连接要素中的所选字段可能会根据有效的合并规则进行聚合。默认值为空字符串，在这种情况下，将所有字段从目标要素和连接要素传递到输出。有关字段映射的详细信息，请参阅帮助主题“使用字段映射控件”和“将输入字段映射到输出字段”。可以指定多个字段和统计数据组合。</p>
        <p>合并规则用于指定如何将两个或更多个输入字段的值合并或组合为一个输出值。有多种合并规则可用于确定如何用值填充输出字段。</p>
        <ul>
          <li>First - 使用输入字段的第一个值。</li><li>Last - 使用输入字段的最后一个值。</li><li>Join - 串连（连接）输入字段的值。</li><li>Sum - 计算输入字段值的总和。</li><li>Mean - 计算输入字段值的平均值。</li><li>Median - 计算输入字段值的中值。</li><li>Mode - 使用具有最高频率的值。</li><li>Min - 使用所有输入字段值中的最小值。</li><li>Max - 使用所有输入字段值中的最大值。</li><li>Standard deviation - 对所有输入字段值使用标准差分类方法。</li><li>Count - 查找计算中所包含的记录数。</li>
        </ul>
      </article>
      <div class="vbar help"><svg><use href="#up"/></svg><div class="slot"><i></i></div><svg><use href="#down"/></svg></div>
    </div>
  </div>
  <div class="dfoot"><button class="b1 def">确定</button><button class="b1">取消</button><button class="b2">环境...</button><button class="b3">&lt;&lt; 隐藏帮助</button><button class="b3 apart">工具帮助</button></div>
</div>

<div class="menu m1" role="menu">
  <button>删除</button><button>重命名</button><button class="hot">合并规则<svg viewBox="0 0 8 12"><path d="M1.500 1.500L6 6l-4.500 4.500" fill="none" stroke="#333" stroke-width="1.200"/></svg></button><hr><button>属性...</button>
</div>
<div class="menu m2" role="menu">
  <button>第一个</button><button>最后一个</button><button>最小值</button><button>最大值</button><button>计数</button><button class="hot picked"><svg viewBox="0 0 14 12"><path d="M1 6l4 4 8-8" fill="none" stroke="#222" stroke-width="1.600"/></svg>总和</button><button>平均值</button><button>标准差</button><button>中值</button><button>模式</button><button>范围</button>
</div>
</body>
</html>
```
FILE: styles.css
```css
* { box-sizing: border-box; }
html, body { height: 100%; margin: 0; }
body {
  display: flex; flex-direction: column; overflow: hidden; position: relative;
  background: #f0f0f0; color: #000;
  font: 15px/20px "Open Sans", "Noto Sans CJK SC", sans-serif;
}
h1, h2, h3, p, ul { margin: 0; padding: 0; font: inherit; }
ul { list-style: none; }
button, input, select { font: inherit; color: inherit; margin: 0; padding: 0; border: 0; background: none; border-radius: 0; }
button { display: flex; align-items: center; justify-content: center; white-space: nowrap; }
svg { display: block; flex: none; width: 18px; height: 18px; }
.defs { position: absolute; width: 0; height: 0; }
.i9 { width: 9px; height: 9px; } .i12 { width: 12px; height: 12px; } .i18 { width: 18px; height: 18px; }
.i20 { width: 20px; height: 20px; } .i22 { width: 22px; height: 22px; }

/* main window chrome */
.titlebar { flex: none; height: 29px; display: flex; align-items: center; padding: 0 0 2px 1px; gap: 4px; background: #fff; color: #8c8c8c; }
.winctl { display: flex; margin-left: auto; color: #888; }
.winctl button { width: 58px; height: 27px; }
.titlebar .winctl { padding-right: 3px; }
.winctl.dark { color: #000; }
.menubar { flex: none; height: 31px; display: flex; align-items: center; gap: 16px; padding: 0 0 2px 12px; background: linear-gradient(90deg, #efefef, #fafafa); }
.toolbars { flex: none; height: 29px; display: flex; border-bottom: 1px solid #777; background: #f0f0f0; }
.toolbar { display: flex; align-items: center; height: 28px; background: linear-gradient(#fcfcfc, #ececec); margin-right: 3px; }
.toolbar.wide { margin-right: 7px; }
.toolbar.last { flex: 1; margin-right: 0; }
.toolbar button, .tocbar button, .lrow button { width: 22px; height: 22px; }
.toolbar svg { width: 17px; height: 17px; }
.toolbar button.word { width: auto; padding: 0 0 0 3px; }
.grip { width: 3px; height: 20px; margin: 0 1px 0 6px; background: repeating-linear-gradient(#b5b5b5 0 2px, transparent 2px 4px); }
.sep { width: 1px; height: 18px; margin: 0 2px 0 3px; background: #bdbdbd; flex: none; }
.sep.blank { background: none; }
.caret { width: 11px; height: 4px; flex: none; background: #000; clip-path: polygon(3px 0, 9px 0, 6px 3px); }
.word .caret { margin-left: 1px; width: 12px; }
.caret.dim { background: #999; }
.more { width: 11px; height: 28px; margin-left: auto; flex: none; background: linear-gradient(90deg, #ddd, #999); position: relative; }
.more::after { content: ""; position: absolute; left: 2px; bottom: 3px; width: 7px; height: 7px; background: linear-gradient(#000, #000) 1px 0 / 5px 1px no-repeat, linear-gradient(#000, #000) 1px 3px / 5px 1px no-repeat, linear-gradient(#000, #000) 2px 4px / 3px 1px no-repeat, linear-gradient(#000, #000) 3px 5px / 1px 1px no-repeat; }
button.on { background: #dbebf8; border: 1px solid #1583dc; }

/* drop-downs */
.pick { position: relative; background: #fff; border: 1px solid #7a7a7a; height: 23px; display: flex; flex: none; }
.pick select { appearance: none; width: 100%; height: 100%; padding: 0 2px; outline: 0; }
.pick::after { content: ""; position: absolute; right: 9px; top: 6px; width: 6px; height: 6px; border: solid #555; border-width: 0 1px 1px 0; transform: rotate(45deg); pointer-events: none; }
.scale { width: 148px; }
.scale select { font: 14px "Liberation Mono", monospace; }
.zoom { width: 59px; height: 22px; border-color: #ccc; margin: 0 2px; }
.zoom select { width: 35px; height: 18px; margin: 1px; padding: 0; background: #0078d7; color: #6b6b6b; font: 14px "Liberation Mono", monospace; }

/* side panes */
.workspace { flex: 1; min-height: 0; display: flex; }
.panehead { flex: none; display: flex; align-items: center; gap: 9px; background: linear-gradient(90deg, #bccbdb, #d7e4f2); padding: 0 4px; }
.panehead h2 { flex: 1; }
.toc { width: 418px; flex: none; display: flex; flex-direction: column; margin: 0 6px 1px 0; }
.toc .panehead { height: 25px; }
.tocbar { flex: none; height: 26px; display: flex; align-items: center; padding-left: 4px; background: linear-gradient(90deg, #fafafa, #efefef); }
.layers { flex: 1; border: 1px solid #828790; background: #fff; }
.root { display: flex; align-items: center; height: 24px; padding: 0 0 3px 7px; gap: 4px; }
.root svg { width: 16px; height: 15px; }
.layers li { display: flex; align-items: center; height: 23px; padding-left: 26px; }
.layers label { display: flex; align-items: center; margin-left: 6px; }
.layers label span { padding: 0 2px; height: 23px; line-height: 22px; margin-left: 5px; }
.hit { background: #0078d7; color: #fff; }
.layers input { appearance: none; width: 12px; height: 12px; border: 1px solid #000; background: #fff; position: relative; }
.layers input:checked::after { content: ""; position: absolute; left: 1px; top: 1px; width: 8px; height: 8px; background: #000; clip-path: polygon(0 3px, 3px 5px, 8px 0, 8px 3px, 3px 8px, 0 6px); }
.pm { flex: none; width: 11px; height: 11px; border: 1px solid #999; background: linear-gradient(#33539f, #33539f) center / 7px 1px no-repeat, linear-gradient(#33539f, #33539f) center / 1px 7px no-repeat, #f4f4f4; }
.pm.minus { background: linear-gradient(#33539f, #33539f) center / 7px 1px no-repeat, #f4f4f4; }

/* map */
.mapcol { flex: 1; min-width: 0; display: flex; flex-direction: column; border-left: 1px solid #777; margin-bottom: 1px; }
.map { flex: 1; width: 100%; min-height: 0; background: #fff; }
.mapbar { flex: none; height: 21px; display: flex; border-top: 2px solid #fff; border-bottom: 1px solid #ddd; }
.mapbar button { width: 21px; height: 18px; }
.mapbar svg { width: 11px; height: 11px; }
.mapbar button.on { background: #c5dff5; border-color: #99c9f2; }
.mapbar .track { flex: 1; display: grid; grid-template-columns: 1fr 289px 179px; }
.mapbar .track i { grid-column: 2; height: 18px; background: #cdcdcd; }

/* ArcToolbox pane */
.toolbox { width: 374px; flex: none; display: flex; flex-direction: column; padding: 6px 1px 0 3px; border-bottom: 1px solid #000; }
.toolbox .panehead { height: 24px; margin-bottom: 2px; gap: 8px; }
.tbxbody { flex: 1; min-height: 0; display: flex; border: 1px solid #828790; background: #fff; position: relative; overflow: hidden; }
.tbxbody ul { flex: 1; display: grid; grid-auto-rows: 22px; margin-top: 1px; min-width: 0; white-space: nowrap; }
.tbxbody li { display: flex; align-items: center; padding-left: 26px; gap: 3px; }
.tbxbody li svg { width: 16px; height: 16px; margin-left: 3px; }
.tbxbody li.leaf { padding-left: 62px; }
.tbxbody li.leaf svg { margin: 0; }
.tbxbody li.edge { padding-left: 234px; }
.r1 { grid-row: 1; } .r31 { grid-row: 31; } .r34 { grid-row: 34; } .r38 { grid-row: 38; } .r39 { grid-row: 39; }
.pill { position: absolute; right: 0; top: 565px; width: 10px; height: 73px; border-radius: 5px; background: repeating-linear-gradient(#3ecf62 0 2px, #606060 2px 3px) 1px 53px / 8px 17px no-repeat, #5e5e5e; }
.tabs { flex: none; height: 27px; display: flex; align-items: flex-start; padding-left: 2px; }
.tabs button { height: 22px; padding: 0 3px; gap: 4px; border: 1px solid #999; border-top: 0; border-radius: 0 0 4px 4px; color: #777; }
.tabs button.cur { background: #fff; color: #000; }
.tabs svg { width: 17px; height: 17px; }

/* scroll bars */
.vbar { flex: none; display: flex; flex-direction: column; align-items: center; background: #f0f0f0; }
.vbar svg { width: 16px; height: 12px; }
.vbar .slot { flex: 1; width: 100%; display: grid; }
.vbar .slot i { background: #cdcdcd; }
.vbar.slim { width: 19px; padding: 7px 0 6px; margin-right: 2px; }
.vbar.slim svg { width: 10px; height: 9px; }
.vbar.slim .slot { grid-template-rows: 253fr 288fr 274fr; }
.vbar.slim .slot i { grid-row: 2; }
.vbar.form { width: 19px; padding: 16px 0 18px; margin-right: 2px; }
.vbar.form .slot { margin: 7px 0 14px; }
.vbar.help { width: 21px; padding: 16px 1px 17px; }
.vbar.help .slot { margin: 7px 0 12px; }

/* status bar and taskbar */
.status { flex: none; height: 25px; display: flex; justify-content: flex-end; align-items: center; padding: 2px 146px 0 0; }
.taskbar { flex: none; height: 50px; display: flex; background: #201d1d; color: #fff; position: relative; }
.app { width: 60px; height: 50px; }
.app svg { width: 20px; height: 20px; }
.app svg.big { width: 29px; height: 29px; }
.app.run { width: 52px; margin: 0 5px; border-bottom: 3px solid #fd9268; padding-top: 3px; }
.app.first { margin-left: 8px; }
.app.two { border-image: linear-gradient(90deg, #fd9268 78%, #c27a5c 78%) 3; }
.app.run.active { width: 61px; margin: 0 1px; background: #4e4b4b; }
.tray { flex: 1; display: flex; align-items: center; justify-content: flex-end; padding-right: 26px; border-right: 1px solid #555; margin-right: 4px; }
.ch { font: 14px "Liberation Serif", serif; margin-right: 9px; }
.ime { width: 19px; height: 19px; background: #fff; color: #000; font: 16px/18px "Noto Sans CJK SC", sans-serif; text-align: center; }
.tray > svg { margin-left: 20px; }
.tray .zh { font-size: 20px; margin: 0 18px 0 12px; }
.clock { display: flex; flex-direction: column; align-items: center; width: 70px; margin: 0 21px 0 24px; font-size: 16px; line-height: 23px; }
.tray > svg.note { width: 20px; height: 22px; margin-left: 7px; }
.mark { position: absolute; right: 16px; top: 24px; font: 12px/20px "Liberation Sans", "Noto Sans CJK SC", sans-serif; color: #a5a5a5; }

/* floating layout toolbar */
.layoutbar { position: absolute; left: 810px; top: 5px; width: 370px; height: 50px; border: 2px solid #8e8e8e; background: #f5f5f5; }
.lhead { display: flex; align-items: center; height: 20px; margin: 1px; padding: 0 8px 0 2px; background: #a0a0a0; color: #fff; }
.lhead span { flex: 1; line-height: 18px; }
.lhead .caret { background: #fff; margin-right: 9px; }
.lrow { display: flex; align-items: center; height: 23px; }
.lrow svg { width: 17px; height: 17px; }
.lrow button.on { border-color: #a8c4dc; background: #e4edf5; }

.upload { position: absolute; right: 133px; top: 35px; width: 131px; height: 32px; border: 2px solid #23a4ff; border-radius: 5px; background: #caefff; overflow: hidden; color: #4eb4fa; align-items: stretch; }
.upload .logo { width: 35px; background: #23a4ff; color: #fff; display: grid; place-items: center; }
.upload .logo svg { width: 24px; height: 22px; }
.upload .txt { flex: 1; line-height: 28px; }

/* tool dialog */
.dialog { position: absolute; left: 388px; right: 136px; top: 136px; bottom: 134px; display: flex; flex-direction: column; border: 1px solid #666; background: #f0f0f0; box-shadow: 2px 5px 18px rgba(0,0,0,.42); }
.dhead { flex: none; height: 37px; display: flex; align-items: center; gap: 4px; padding: 0 1px 1px 9px; background: #fff; }
.dbody { flex: 1; min-height: 0; display: flex; gap: 4px; }
.formpane, .helppane { border: 1px solid #6b6b6b; border-right-color: #e0e0e0; border-bottom-color: #e0e0e0; min-width: 0; }
.formpane { flex: 1; display: flex; flex-direction: column; padding-bottom: 1px; font: 15px/18px "Noto Sans CJK SC", sans-serif; }
.formrow { flex: 1; min-height: 0; display: flex; }
form { flex: 1; min-width: 0; display: flex; flex-direction: column; padding: 10px 11px 0 20px; }
form label, .cap { display: block; flex: none; }
.tall { height: 25px; line-height: 23px; }
.tall.next { margin-top: 3px; }
.low { height: 17px; margin-top: 4px; line-height: 15px; }
.low.wide { margin-top: 7px; }
.radius + .low { margin-top: 3px; }
.line { flex: none; display: flex; height: 24px; }
.line > input, .line > .pick.old { flex: 1; height: 24px; margin-right: 11px; }
input[type=text] { border: 1px solid #7a7a7a; background: #fff; padding: 0 2px; min-width: 0; }
.line > input { font: 14px "Liberation Mono", "Noto Sans CJK SC", monospace; }
.code { font: 13px "Liberation Mono", monospace; }
.pick.old { border: 0; border-top: 2px solid #7a7a7a; border-left: 2px solid #7a7a7a; }
.pick.old select { padding: 0 1px 2px; }
.pick.old::after { right: 1px; top: 0; width: 16px; height: 20px; border: 0; border-bottom: 2px solid #777; transform: none; background: linear-gradient(#000, #000) 3px 8px / 9px 1px no-repeat, linear-gradient(#000, #000) 4px 9px / 7px 1px no-repeat, linear-gradient(#000, #000) 5px 10px / 5px 1px no-repeat, linear-gradient(#000, #000) 6px 11px / 3px 1px no-repeat, linear-gradient(#000, #000) 7px 12px / 1px 1px no-repeat, #f0f0f0; }
.sq { width: 27px; height: 30px; border: 1px solid #adadad; background: #e1e1e1; flex: none; }
.line .sq { margin: -3px 0; }
.sq svg { width: 16px; height: 16px; }
form .check { display: flex; align-items: center; gap: 5px; margin: 11px 0 0 3px; height: 18px; }
.check input { appearance: none; width: 16px; height: 16px; border: 1px solid #333; background: #fff; display: grid; place-items: center; }
.check input::after { content: ""; width: 5px; height: 9px; margin-top: -3px; border: solid #333; border-width: 0 1px 1px 0; transform: rotate(45deg); }
.cap { height: 34px; padding-top: 12px; }
.treerow { flex: 1; min-height: 0; display: flex; gap: 9px; }
.tree { flex: 1; border: 1px solid #828790; background: #fff; padding: 1px 8px; }
.tree li { display: flex; align-items: center; height: 18px; position: relative; }
.tree li + li::before { content: ""; position: absolute; left: 5px; top: -3px; height: 6px; border-left: 1px dashed #666; }
.tree span { margin-left: 5px; padding: 0 1px; height: 18px; line-height: 17px; white-space: pre; }
.tree code { font: 13px "Liberation Mono", monospace; }
.treebtns { display: flex; flex-direction: column; gap: 16px; padding-top: 1px; }
.treebtns .far { margin-top: 4px; }
.radius > input { margin-right: 15px; }
.pick.gray { width: 158px; background: #e1e1e1; border-color: #adadad; }
input.cutoff { flex: none; height: 14px; border-color: #ccc; border-bottom: 0; background: #f0f0f0; }
.hbar { flex: none; height: 19px; display: flex; align-items: center; margin: 0 35px 0 16px; gap: 6px; }
.hbar i { flex: 1; height: 19px; background: #cdcdcd; }
.hbar svg { width: 13px; height: 17px; }
.helppane { width: 393px; flex: none; display: flex; background: #fff; }
article { flex: 1; padding: 11px 5px 0 20px; font: 17px/19px "Liberation Sans", "Noto Sans CJK SC", sans-serif; overflow: hidden; }
article h3 { font: bold 20px/24px "Noto Sans CJK SC", sans-serif; margin-bottom: 22px; white-space: nowrap; }
article p { font-family: "Noto Sans CJK SC", sans-serif; margin: 0 15px 23px 0; text-spacing-trim: space-all; }
article ul { margin-top: 27px; padding-left: 50px; list-style: disc; }
article li { margin-bottom: 4px; text-spacing-trim: space-all; }
.dfoot { flex: none; height: 53px; display: flex; align-items: center; justify-content: flex-end; gap: 7px; padding: 0 264px 4px 0; }
.dfoot button { height: 26px; padding-bottom: 2px; border: 1px solid #adadad; background: #e1e1e1; }
.dfoot .b1 { width: 86px; } .dfoot .b2 { width: 103px; } .dfoot .b3 { width: 112px; }
.dfoot .apart { width: 117px; margin-left: 16px; }
.dfoot .def { border: 2px solid #0078d7; }

/* context menus */
.menu { position: absolute; width: 158px; padding: 2px; border: 1px solid #c4c4c4; background: #f2f2f2; box-shadow: 4px 4px 3px -1px rgba(0,0,0,.5); }
.menu button { width: 100%; height: 24px; padding: 0 0 1px 34px; justify-content: flex-start; }
.menu hr { margin: 3px 0 4px 30px; border: 0; border-top: 1px solid #ccc; }
.m1 { left: 482px; top: 606px; }
.m2 { left: 634px; top: 654px; }
.menu .hot { background: #91c9f7; }
.m1 .hot svg { width: 8px; height: 12px; margin-left: auto; margin-right: 8px; }
.menu .picked { padding-left: 0; gap: 10px; }
.m2 .picked svg { width: 24px; height: 24px; padding: 6px 5px; background: #56b0fa; }
```
